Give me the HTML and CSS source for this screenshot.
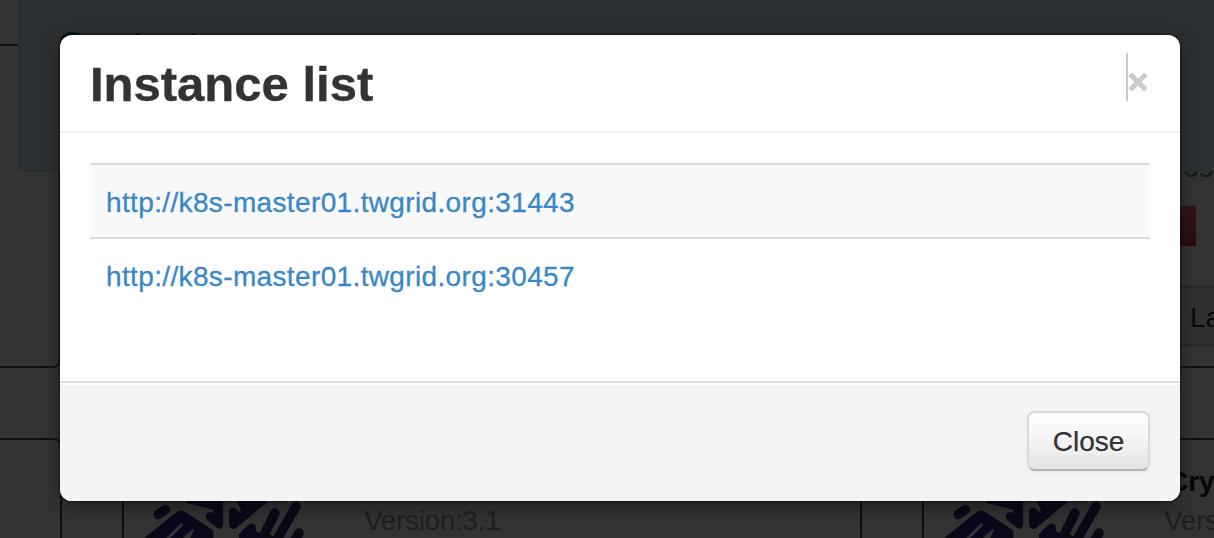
FILE: index.html
```html
<!DOCTYPE html>
<html lang="en">
<head>
<meta charset="utf-8">
<title>Instance list</title>
<link rel="stylesheet" href="styles.css">
</head>
<body>
<svg class="defs" aria-hidden="true">
  <symbol id="mark" viewBox="140 500 170 44">
    <g fill="currentColor" stroke="currentColor" stroke-linejoin="round" stroke-linecap="round">
      <path stroke-width="9.500" d="M158 514.500L165.500 509.500"/>
      <path stroke-width="5" d="M146 540L178 514Q181 511.500 184 514L211 532V540H192L197 528.500 193 525.500 177 540H172L187 525 181 519.500 161 540Z"/>
      <path stroke-width="3" d="M187 498H221.700V525Q220 529 217 526L207.500 518Q206.500 514 210 513.500L214.500 515 215 508.500 187 501.500Z"/>
      <path stroke-width="3" d="M238 498L243 513.500 240 514.500Q233 506 230.500 511V524Q231 529 235 527L265 502V498Z"/>
      <path stroke-width="4" d="M241 541V535L250 526Q254 524 254 529V533L260 535H268L276 541Z"/>
      <path fill="none" stroke-width="9.500" d="M261 541L275 513M275 543L296 506.500M292 545L299 533"/>
    </g>
  </symbol>
</svg>
<div class="page" aria-hidden="true">
  <div class="top">
    <div class="panel"></div>
    <div class="alert"><span class="alert-title">Contact</span></div>
    <div class="badge"></div>
    <div class="side">
      <div class="side-text">ost</div>
      <div class="danger"></div>
      <div class="side-head">La</div>
    </div>
  </div>
  <div class="cards">
    <div class="card first"></div>
    <div class="card"><svg class="mark"><use href="#mark"/></svg>
      <div class="info"><b>Cry</b><span>Version:3.1</span></div></div>
    <div class="card"><svg class="mark"><use href="#mark"/></svg>
      <div class="info"><b>Cry</b><span>Version:3.1</span></div></div>
  </div>
</div>
<div class="backdrop">
  <section class="modal" role="dialog" aria-label="Instance list">
    <header class="modal-header">
      <h3>Instance list</h3>
      <button class="dismiss" aria-label="Dismiss"><svg viewBox="0 0 20 20"><path d="M2.200 2.200L17.800 17.800M17.800 2.200L2.200 17.800"/></svg></button>
    </header>
    <div class="modal-body">
      <ul class="list">
        <li><a href="#">http://k8s-master01.twgrid.org:31443</a></li>
        <li><a href="#">http://k8s-master01.twgrid.org:30457</a></li>
      </ul>
    </div>
    <footer class="modal-footer"><button class="btn">Close</button></footer>
  </section>
</div>
</body>
</html>
```
FILE: styles.css
```css
* { box-sizing: border-box; }
body {
  margin: 0;
  height: 538px;
  overflow: hidden;
  background: #fff;
  color: #333;
  font-family: "Liberation Sans", Arial, sans-serif;
  font-size: 28px;
}
.defs { position: absolute; width: 0; height: 0; }

.page { height: 538px; width: 1214px; overflow: hidden; }
.top { position: relative; height: 438px; padding-top: 44px; }
.panel {
  width: 81px;
  height: 324px;
  margin-left: -20px;
  border: 2px solid #555;
  border-radius: 8px;
}
.alert {
  position: absolute;
  left: 18px;
  top: -20px;
  width: 1300px;
  height: 192px;
  padding: 42px 0 0 38px;
  border: 2px solid #bce8f1;
  border-radius: 8px;
  background: #d9edf7;
}
.alert-title {
  display: block;
  color: #306080;
  font-size: 38px;
  line-height: 44px;
  font-weight: bold;
}
.badge {
  position: absolute;
  left: -20px;
  top: 206px;
  width: 43px;
  height: 40px;
  border-radius: 8px;
  background: #fbfbfb;
  box-shadow: inset 0 2px 4px rgba(0, 0, 0, .07);
}
.side {
  position: absolute;
  left: 1172px;
  top: 172px;
  width: 42px;
  height: 196px;
  border-bottom: 2px solid #555;
}
.side-text {
  height: 34px;
  padding-left: 10px;
  overflow: hidden;
  color: #888;
  font-weight: bold;
  font-size: 26px;
  line-height: 0;
  text-indent: 1px;
  margin-top: -4px;
  margin-bottom: 4px;
  clip-path: inset(4px 0 0 0);
}
.danger {
  width: 24px;
  height: 40px;
  background: linear-gradient(#f46a64, #bd463f);
}
.side-head {
  height: 60px;
  margin-top: 40px;
  padding-left: 18px;
  border: solid #ccc;
  border-width: 2px 0;
  background: #f6f6f6;
  line-height: 60px;
}
.cards { display: flex; gap: 60px; margin-left: -680px; }
.card {
  display: flex;
  flex: none;
  width: 742px;
  height: 200px;
  padding: 24px 16px;
  border: 2px solid #555;
  border-radius: 8px;
}
.card + .card { width: 740px; }
.mark { width: 170px; height: 44px; margin-top: 36px; color: #3c2378; }
.info { display: flex; flex-direction: column; margin-left: 54px; line-height: 42px; }
.info b { padding-left: 4px; line-height: 36px; color: #222; }
.info span { color: #999; letter-spacing: -.35px; }

.backdrop {
  position: absolute;
  inset: 0;
  padding: 35px 34px 37px 60px;
  background: rgba(0, 0, 0, .8);
}
.modal {
  display: flex;
  flex-direction: column;
  width: 1120px;
  height: 466px;
  overflow: hidden;
  border-radius: 12px;
  background: #fff;
  box-shadow: 0 6px 20px rgba(0, 0, 0, .4), 0 0 0 2px rgba(0, 0, 0, .2);
}
.modal-header {
  display: flex;
  justify-content: space-between;
  height: 98px;
  padding: 18px 30px 0;
  border-bottom: 2px solid #eee;
}
h3 {
  margin: 0;
  font-size: 49px;
  line-height: 63px;
  -webkit-text-stroke: .4px #333;
}
.dismiss {
  display: flex;
  align-items: flex-start;
  width: 24px;
  height: 48px;
  padding: 19px 0 0;
  border: 0;
  border-left: 2px solid #ccc;
  background: none;
}
.dismiss svg { flex: none; width: 20px; height: 20px; stroke: #ccc; stroke-width: 5; }
.modal-body { flex: 1; padding: 30px; }
.list { margin: 0; padding: 0; list-style: none; }
.list li {
  height: 74px;
  padding: 0 16px;
  border-top: 2px solid #ddd;
  line-height: 76px;
}
.list li:first-child { background: #f9f9f9; }
.list a {
  color: #3a87c8;
  text-decoration: none;
  letter-spacing: .36px;
  -webkit-text-stroke: .3px #3a87c8;
}
.modal-footer {
  display: flex;
  justify-content: flex-end;
  height: 120px;
  padding: 28px 30px 0;
  border-top: 2px solid #ddd;
  background: #f4f4f4;
  box-shadow: inset 0 2px #fff;
}
.btn {
  width: 123px;
  height: 60px;
  padding: 2px 0 0;
  border: 2px solid #dadada;
  border-bottom-color: #b3b3b3;
  border-radius: 8px;
  background: linear-gradient(#fff, #e6e6e6);
  box-shadow: 0 2px 4px rgba(0, 0, 0, .05);
  color: #333;
  font: 28px "Liberation Sans", Arial, sans-serif;
  text-shadow: 0 2px 2px rgba(255, 255, 255, .75);
  -webkit-text-stroke: .25px #333;
}
```
